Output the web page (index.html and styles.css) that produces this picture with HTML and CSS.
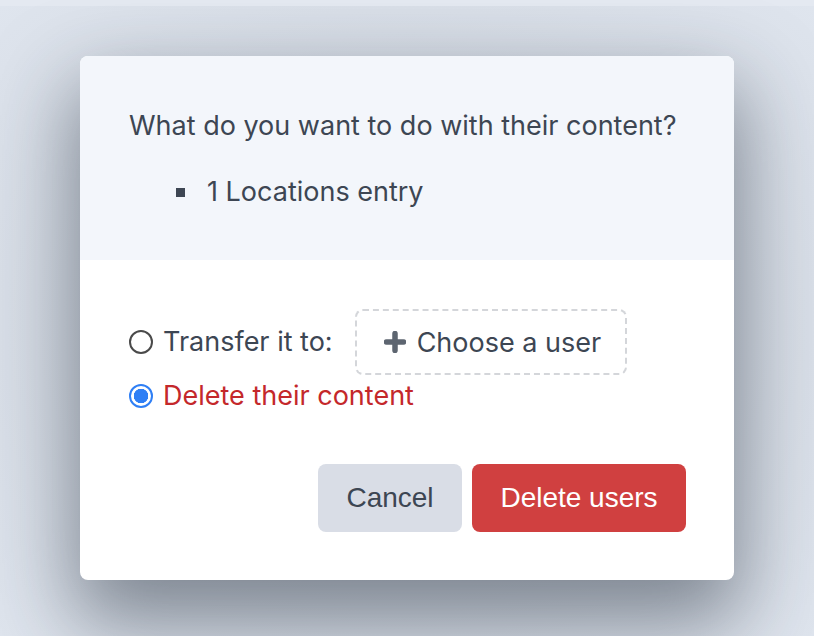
FILE: index.html
```html
<!DOCTYPE html>
<html lang="en">
  <head>
    <title>Delete users</title>
    <meta charset="utf-8" />
    <link rel="stylesheet" href="styles.css">
  </head>
  <body>
    <div class="topbar"></div>
    <div class="backdrop">
      <div class="modal">
        <div class="modal-head">
          <p class="question">What do you want to do with their content?</p>
          <ul class="content-list">
            <li>1 Locations entry</li>
          </ul>
        </div>
        <div class="modal-body">
          <div class="choice">
            <label class="radio-row">
              <input type="radio" name="content" value="transfer" />
              <span>Transfer it to:</span>
            </label>
            <button class="pick-user">
              <svg width="22" height="22" viewBox="0 0 22 22">
                <path d="M11 2.5v17M2.5 11h17" stroke="#5d6570" stroke-width="5.5" stroke-linecap="round" />
              </svg>
              Choose a user
            </button>
          </div>
          <label class="radio-row danger">
            <input type="radio" name="content" value="delete" checked />
            <span>Delete their content</span>
          </label>
          <div class="actions">
            <button class="btn btn-cancel">Cancel</button>
            <button class="btn btn-delete">Delete users</button>
          </div>
        </div>
      </div>
    </div>
  </body>
</html>
```

FILE: styles.css
```css
html,
body {
  margin: 0;
  height: 100%;
}
body {
  display: flex;
  flex-direction: column;
  font-family: Inter, "Noto Sans", sans-serif;
  color: #3d4653;
  background: #dfe5ee;
  overflow: hidden;
}
.topbar {
  height: 6px;
  background: #e4e9f1;
}
.backdrop {
  flex: 1;
  display: flex;
  justify-content: center;
  align-items: flex-start;
  padding-top: 50px;
  background: radial-gradient(ellipse at 50% 50%, #c6cdd7 0%, #d6dce5 55%, #dfe5ee 100%);
}
.modal {
  width: 654px;
  height: 524px;
  border-radius: 8px;
  overflow: hidden;
  background: #fff;
  box-shadow: 0 36px 80px 6px rgba(35, 45, 60, 0.5);
}
.modal-head {
  background: #f3f6fb;
  padding: 52px 40px 50px 49px;
}
.question {
  margin: 0;
  font-size: 27px;
  line-height: 36px;
}
.content-list {
  list-style: none;
  margin: 30px 0 0 0;
  padding: 0 0 0 47px;
  font-size: 27px;
  line-height: 36px;
}
.content-list li {
  display: flex;
  align-items: center;
  gap: 22px;
}
.content-list li::before {
  content: "";
  width: 9px;
  height: 9px;
  background: #3d4653;
}
.modal-body {
  padding: 49px 48px 0 49px;
}
.choice {
  display: flex;
  align-items: center;
  gap: 22px;
}
.radio-row {
  display: flex;
  align-items: center;
  gap: 10px;
  font-size: 27px;
  line-height: 36px;
}
.radio-row input {
  appearance: none;
  width: 24px;
  height: 24px;
  margin: 0;
  border: 2px solid #4a4a4a;
  border-radius: 50%;
  background: #fff;
}
.radio-row input:checked {
  border: 2px solid #2f7ff5;
  background: radial-gradient(circle, #2f7ff5 0 7px, #fff 7.5px);
}
.danger {
  color: #c4282b;
  margin-top: 3px;
}
.pick-user {
  display: flex;
  align-items: center;
  gap: 11px;
  height: 66px;
  padding: 0 24px 0 27px;
  border: 2px dashed #d4d6da;
  border-radius: 8px;
  background: #fff;
  color: #3d4653;
  font-family: inherit;
  font-size: 27px;
}
.actions {
  display: flex;
  justify-content: flex-end;
  gap: 10px;
  margin-top: 50px;
}
.btn {
  height: 68px;
  border: 0;
  border-radius: 8px;
  font-family: "Liberation Sans", Arial, sans-serif;
  font-size: 28px;
}
.btn-cancel {
  width: 144px;
  background: #d9dde6;
  color: #3d4653;
}
.btn-delete {
  width: 214px;
  background: #d04040;
  color: #fff;
}
```
